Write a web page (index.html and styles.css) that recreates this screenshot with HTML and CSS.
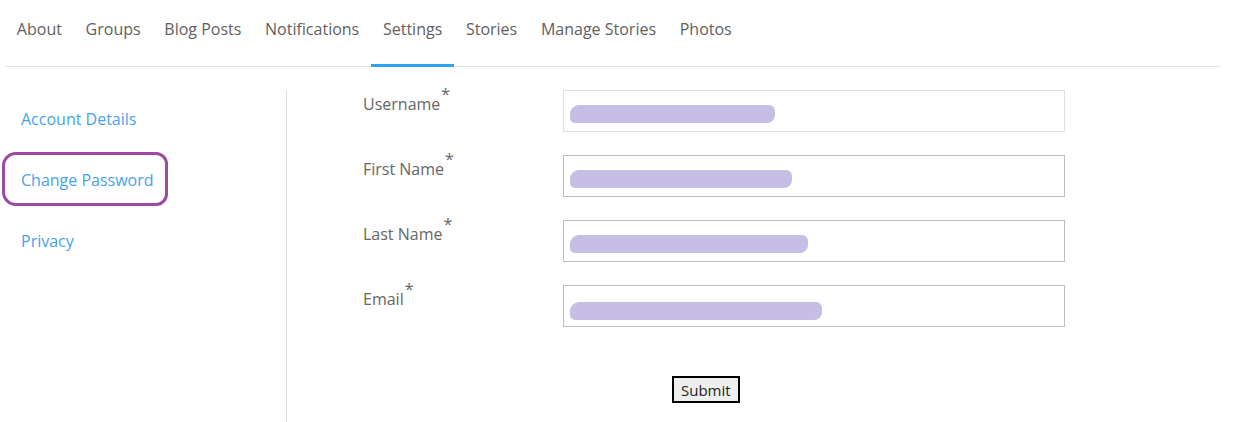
FILE: index.html
```html
<!DOCTYPE html>
<html lang="en">
<head>
  <meta charset="UTF-8" />
  <meta name="viewport" content="width=device-width, initial-scale=1.0"/>
  <title>Settings</title>
  <link rel="stylesheet" href="styles.css">
</head>
<body>

  <!-- top tabs -->
  <nav class="tabs">
    <a href="#">About</a>
    <a href="#">Groups</a>
    <a href="#">Blog Posts</a>
    <a href="#">Notifications</a>
    <a href="#" class="active">Settings</a>
    <a href="#">Stories</a>
    <a href="#">Manage Stories</a>
    <a href="#">Photos</a>
  </nav>

  <div class="main">
    <!-- left menu -->
    <aside class="side">
      <a href="#">Account Details</a>
      <a href="#">Change Password</a>
      <a href="#">Privacy</a>
      <div class="mark"></div>
    </aside>

    <!-- account form -->
    <form class="form">
      <div class="row">
        <label>Username<sup>*</sup></label>
        <div class="field light"><span class="blur" style="width:205px"></span></div>
      </div>
      <div class="row">
        <label>First Name<sup>*</sup></label>
        <div class="field"><span class="blur" style="width:222px"></span></div>
      </div>
      <div class="row">
        <label>Last Name<sup>*</sup></label>
        <div class="field"><span class="blur" style="width:238px"></span></div>
      </div>
      <div class="row">
        <label>Email<sup>*</sup></label>
        <div class="field"><span class="blur low" style="width:252px"></span></div>
      </div>
      <div class="actions">
        <button type="button">Submit</button>
      </div>
    </form>
  </div>

</body>
</html>
```

FILE: styles.css
```css
body {
  margin: 0;
  font-family: "Open Sans", "Noto Sans", sans-serif;
  background: #fff;
}

/* tabs */
.tabs {
  display: flex;
  margin: 0 27px 0 5px;
  border-bottom: 1px solid #e2e2e2;
}

.tabs a {
  padding: 18px 11.85px 0;
  height: 46px;
  line-height: 22px;
  font-size: 16px;
  color: #5f5f5f;
  text-decoration: none;
  border-bottom: 3px solid transparent;
  margin-bottom: -1px;
}

.tabs a.active {
  border-bottom-color: #2ea3f2;
}

/* body area */
.main {
  display: flex;
  padding-top: 23px;
}

.side {
  position: relative;
  width: 287px;
  min-height: 340px;
  border-right: 1px solid #dcdcdc;
  display: flex;
  flex-direction: column;
  padding-top: 18px;
  box-sizing: border-box;
}

.side a {
  margin-left: 21px;
  font-size: 16px;
  line-height: 22px;
  color: #46a2ee;
  text-decoration: none;
  margin-bottom: 39px;
}

/* purple annotation */
.mark {
  position: absolute;
  left: 2px;
  top: 62px;
  width: 160px;
  height: 48px;
  border: 3px solid #9c4aa2;
  border-radius: 14px 12px 12px 14px;
}

.form {
  padding-left: 76px;
}

.row {
  display: flex;
  margin-bottom: 23px;
}

.row label {
  width: 200px;
  margin-top: -3px;
  font-size: 16px;
  line-height: 22px;
  color: #666;
}

.row sup {
  font-size: 16px;
  position: relative;
  top: -4px;
  margin-left: 1px;
}

.field {
  width: 494px;
  height: 40px;
  border: 1px solid #bdbdbd;
  display: flex;
  align-items: center;
  padding-left: 6px;
}

.field.light {
  border-color: #e0e0e0;
}

/* redacted values */
.blur {
  display: block;
  height: 18px;
  border-radius: 9px 6px 8px 5px;
  background: #c6bee4;
  margin-top: 5px;
}

.blur.low {
  margin-top: 9px;
}

.actions {
  padding-top: 26px;
  padding-left: 309px;
}

.actions button {
  font-family: "Open Sans", sans-serif;
  font-size: 15px;
  padding: 0 7px;
  height: 27px;
  background: #efefef;
  border: 2px solid #000;
  color: #222;
}
```
